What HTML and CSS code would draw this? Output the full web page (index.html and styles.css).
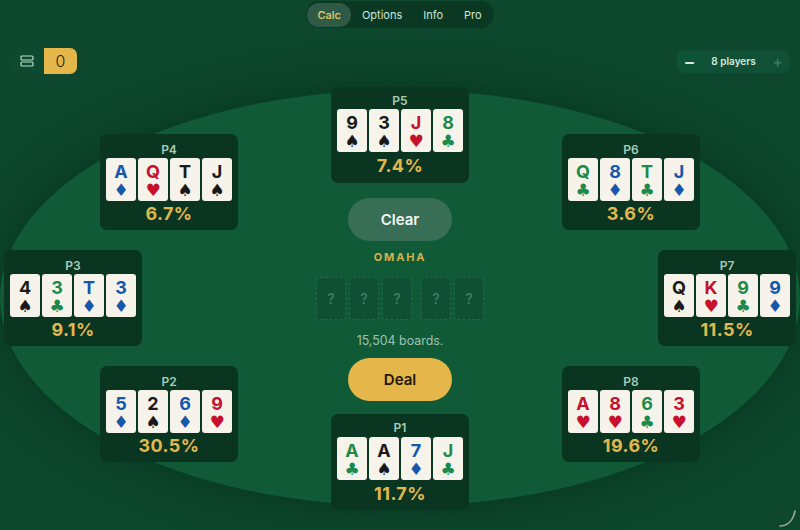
FILE: index.html
```html
<!DOCTYPE html>
<html lang="en">
<head>
    <meta charset="UTF-8">
    <title>Poker Calc</title>
    <link rel="stylesheet" href="styles.css">
</head>
<body>
    <div class="table"></div>

    <header class="topbar">
        <div class="left-tools">
            <button class="stack-btn" aria-label="Saved hands">
                <svg width="14" height="12" viewBox="0 0 14 12" fill="none" stroke="#b9dccb" stroke-width="1.2"><rect x="1" y="1" width="12" height="4" rx="1"/><rect x="1" y="7" width="12" height="4" rx="1"/></svg>
            </button>
            <span class="count">0</span>
        </div>
        <nav class="tabs">
            <a class="tab active">Calc</a>
            <a class="tab">Options</a>
            <a class="tab">Info</a>
            <a class="tab">Pro</a>
        </nav>
        <div class="stepper">
            <button class="step">&minus;</button>
            <span class="step-label">8 players</span>
            <button class="step off">+</button>
        </div>
    </header>

    <div class="seat p5">
        <div class="seat-name">P5</div>
        <div class="hand">
            <div class="card black"><b>9</b><i>♠</i></div>
            <div class="card black"><b>3</b><i>♠</i></div>
            <div class="card red"><b>J</b><i>♥</i></div>
            <div class="card green"><b>8</b><i>♣</i></div>
        </div>
        <div class="equity">7.4%</div>
    </div>

    <div class="seat p4">
        <div class="seat-name">P4</div>
        <div class="hand">
            <div class="card blue"><b>A</b><i>♦</i></div>
            <div class="card red"><b>Q</b><i>♥</i></div>
            <div class="card black"><b>T</b><i>♠</i></div>
            <div class="card black"><b>J</b><i>♠</i></div>
        </div>
        <div class="equity">6.7%</div>
    </div>

    <div class="seat p6">
        <div class="seat-name">P6</div>
        <div class="hand">
            <div class="card green"><b>Q</b><i>♣</i></div>
            <div class="card blue"><b>8</b><i>♦</i></div>
            <div class="card green"><b>T</b><i>♣</i></div>
            <div class="card blue"><b>J</b><i>♦</i></div>
        </div>
        <div class="equity">3.6%</div>
    </div>

    <div class="seat p3">
        <div class="seat-name">P3</div>
        <div class="hand">
            <div class="card black"><b>4</b><i>♠</i></div>
            <div class="card green"><b>3</b><i>♣</i></div>
            <div class="card blue"><b>T</b><i>♦</i></div>
            <div class="card blue"><b>3</b><i>♦</i></div>
        </div>
        <div class="equity">9.1%</div>
    </div>

    <div class="seat p7">
        <div class="seat-name">P7</div>
        <div class="hand">
            <div class="card black"><b>Q</b><i>♠</i></div>
            <div class="card red"><b>K</b><i>♥</i></div>
            <div class="card green"><b>9</b><i>♣</i></div>
            <div class="card blue"><b>9</b><i>♦</i></div>
        </div>
        <div class="equity">11.5%</div>
    </div>

    <div class="seat p2">
        <div class="seat-name">P2</div>
        <div class="hand">
            <div class="card blue"><b>5</b><i>♦</i></div>
            <div class="card black"><b>2</b><i>♠</i></div>
            <div class="card blue"><b>6</b><i>♦</i></div>
            <div class="card red"><b>9</b><i>♥</i></div>
        </div>
        <div class="equity">30.5%</div>
    </div>

    <div class="seat p8">
        <div class="seat-name">P8</div>
        <div class="hand">
            <div class="card red"><b>A</b><i>♥</i></div>
            <div class="card red"><b>8</b><i>♥</i></div>
            <div class="card green"><b>6</b><i>♣</i></div>
            <div class="card red"><b>3</b><i>♥</i></div>
        </div>
        <div class="equity">19.6%</div>
    </div>

    <div class="seat p1">
        <div class="seat-name">P1</div>
        <div class="hand">
            <div class="card green"><b>A</b><i>♣</i></div>
            <div class="card black"><b>A</b><i>♠</i></div>
            <div class="card blue"><b>7</b><i>♦</i></div>
            <div class="card green"><b>J</b><i>♣</i></div>
        </div>
        <div class="equity">11.7%</div>
    </div>

    <main class="center">
        <button class="big-btn clear">Clear</button>
        <div class="game">OMAHA</div>
        <div class="board">
            <div class="slot">?</div>
            <div class="slot">?</div>
            <div class="slot flop-end">?</div>
            <div class="slot">?</div>
            <div class="slot">?</div>
        </div>
        <p class="boards">15,504 boards.</p>
        <button class="big-btn deal">Deal</button>
    </main>

    <svg class="corner" width="20" height="20" viewBox="0 0 20 20" fill="none"><path d="M2 18C9 18 15 13 17 3" stroke="#9aa89f" stroke-width="1.6" stroke-linecap="round"/></svg>
</body>
</html>
```

FILE: styles.css
```css
* { box-sizing: border-box; }
html, body { height: 100%; }
body { margin: 0; height: 530px; overflow: hidden; position: relative; background: #0d472d; font-family: Inter, "Liberation Sans", sans-serif; color: #fff; }
button { font-family: inherit; border: none; padding: 0; }

/* felt */
.table { position: absolute; left: 0; top: 90px; width: 800px; height: 416px; border-radius: 50%; background: #105a38; box-shadow: 0 0 44px 2px rgba(3, 36, 20, 0.5); }

/* top row */
.topbar { position: relative; display: grid; grid-template-columns: 1fr auto 1fr; align-items: start; height: 80px; padding: 0 10px; }
.left-tools { display: flex; height: 26px; margin-top: 48px; width: 67px; border-radius: 7px; overflow: hidden; background: #0e4a30; }
.stack-btn { width: 34px; display: flex; align-items: center; justify-content: center; background: none; }
.count { flex: 1; display: flex; align-items: center; justify-content: center; background: #e5b64a; color: #2a1d05; font-size: 16px; font-weight: 300; }
.tabs { display: flex; align-items: center; margin-top: 1px; height: 27px; width: 188px; padding: 0 1px; border-radius: 14px; background: #0a3822; }
.tab { font-size: 11px; font-weight: 400; color: #cfe6da; padding: 0 10.5px; line-height: 24px; border-radius: 12px; }
.tab.active { background: #2f5a46; color: #e9cf66; font-weight: 500; }
.stepper { display: flex; align-items: center; justify-self: end; margin-top: 50px; height: 23px; width: 113px; border-radius: 7px; background: #105036; }
.step { width: 25px; height: 23px; border-radius: 7px; background: #0f5337; color: #d5e9de; font-size: 18px; font-weight: 600; line-height: 21px; }
.step.off { background: none; color: #3d7c5e; font-size: 15px; }
.step-label { flex: 1; text-align: center; padding-bottom: 1px; font-size: 10px; font-weight: 600; color: #d5e9de; }

/* seats */
.seat { position: absolute; width: 138px; height: 96px; padding: 9px 6px 0; border-radius: 7px; background: #0a3520; text-align: center; }
.seat-name { font-size: 12px; font-weight: 600; line-height: 14px; color: #a8cdbb; }
.hand { display: flex; gap: 2px; margin-top: 1px; }
.card { width: 30px; height: 43px; border-radius: 3px; background: #f6f3ea; display: flex; flex-direction: column; align-items: center; }
.card b { font-size: 18px; font-weight: 700; line-height: 20px; margin-top: 4px; }
.card i { font-family: "DejaVu Sans", sans-serif; font-style: normal; font-size: 17px; line-height: 17px; }
.black { color: #1a1a1a; }
.red { color: #c8102e; }
.green { color: #1f8a47; }
.blue { color: #1557ad; }
.equity { font-size: 18px; font-weight: 700; line-height: 20px; margin-top: 3px; letter-spacing: 0.4px; color: #e2b84e; }

.p1 { left: 331px; top: 414px; }
.p2 { left: 100px; top: 366px; }
.p3 { left: 4px; top: 250px; }
.p4 { left: 100px; top: 134px; }
.p5 { left: 331px; top: 87px; }
.p6 { left: 562px; top: 134px; }
.p7 { left: 658px; top: 250px; }
.p8 { left: 562px; top: 366px; }
.p1, .p5 { padding-top: 7px; }
.p1 .equity, .p5 .equity { margin-top: 4px; }
.p1 .hand { margin-top: 2px; }

/* middle column */
.center { position: absolute; left: 300px; top: 198px; width: 200px; display: flex; flex-direction: column; align-items: center; }
.big-btn { width: 104px; height: 43px; border-radius: 22px; font-size: 15px; font-weight: 600; }
.clear { background: #396e56; color: #f4f8f5; }
.deal { background: #e5b64a; color: #231703; }
.game { margin-top: 9px; font-size: 11px; font-weight: 700; line-height: 14px; letter-spacing: 1.8px; color: #d6b14d; }
.board { display: flex; gap: 3px; margin-top: 13px; }
.slot { width: 30px; height: 43px; border-radius: 4px; border: 1px dashed #1c6a47; background: #0f4f33; color: #3b7c60; font-size: 14px; font-weight: 600; display: flex; align-items: center; justify-content: center; }
.flop-end { margin-right: 6px; }
.boards { margin: 13px 0 9px; font-size: 12.4px; line-height: 16px; color: #9cc4b1; }

.corner { position: absolute; right: 2px; bottom: 2px; }
```
